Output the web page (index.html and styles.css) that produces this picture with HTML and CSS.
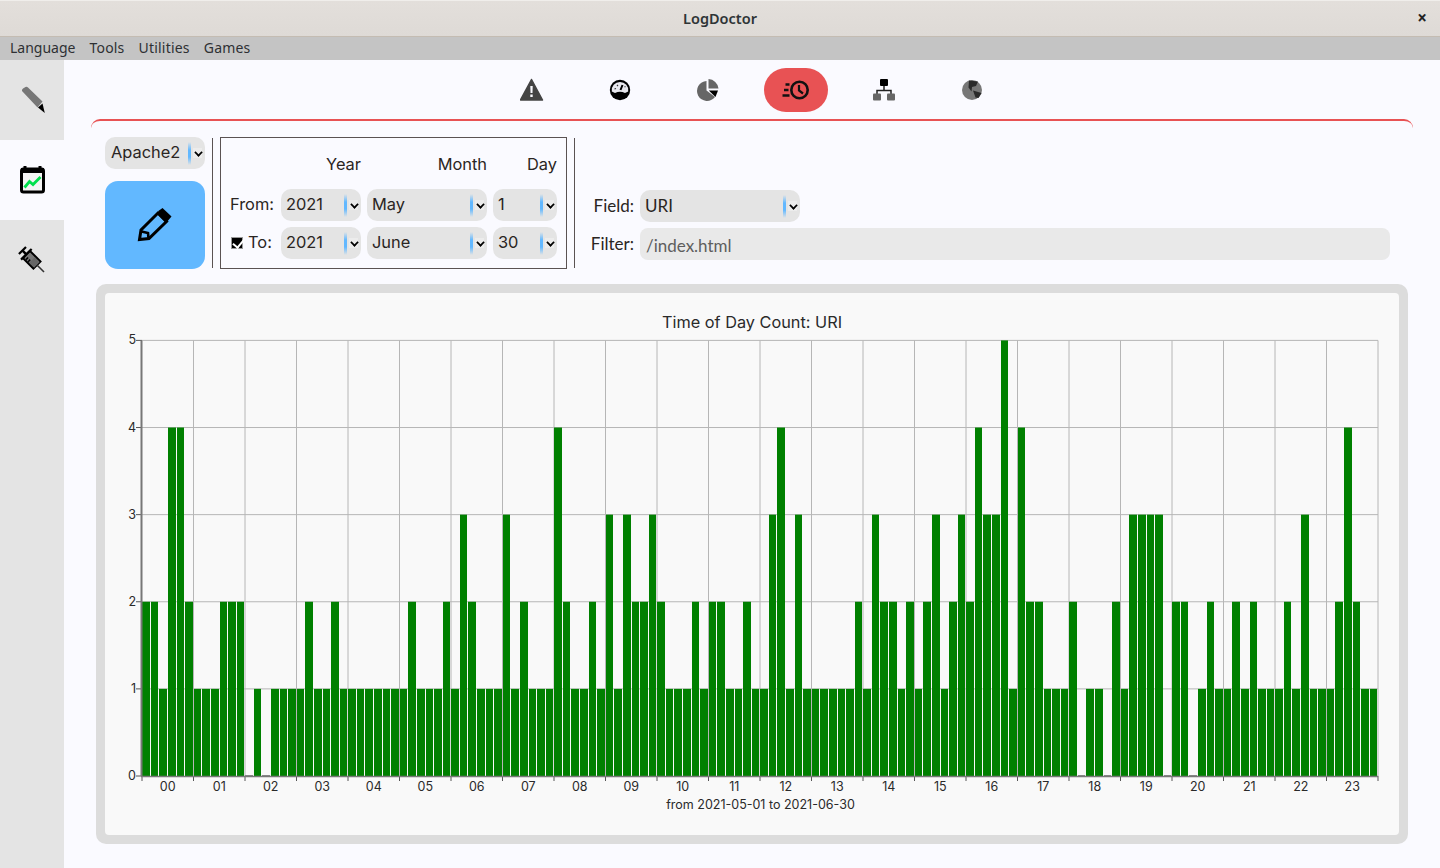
FILE: index.html
```html
<!DOCTYPE html>
<html lang="en">
<head>
<meta charset="utf-8">
<title>LogDoctor</title>
<link rel="stylesheet" href="styles.css">
</head>
<body>
<header class="titlebar"><span class="title">LogDoctor</span><span class="close">×</span></header>
<nav class="menubar"><span>Language</span><span>Tools</span><span>Utilities</span><span>Games</span></nav>
<div class="app">
  <aside class="sidebar">
    <div class="side-tab">
      <svg width="64" height="80" viewBox="0 0 64 80"><path d="M22 31Q21.500 29.500 23 28.500L25.500 27Q27 26.500 28 27.500L42.500 41.500L37.500 47.500Z" fill="#777"/><path d="M38 47.500L42.500 43.500L44.800 53Z" fill="#000"/></svg>
    </div>
    <div class="side-tab active">
      <svg width="64" height="80" viewBox="0 0 64 80"><rect x="21.500" y="29" width="22" height="23" rx="2" fill="#f4f4f4" stroke="#000" stroke-width="3"/><rect x="21" y="28" width="23" height="5" fill="#000"/><rect x="23.500" y="26" width="3" height="4" fill="#000"/><rect x="38.500" y="26" width="3" height="4" fill="#000"/><path d="M24.500 47.500L29.500 41.500L33 44.500L40.500 37" fill="none" stroke="#00e04c" stroke-width="2.800"/></svg>
    </div>
    <div class="side-tab">
      <svg width="64" height="80" viewBox="0 0 64 80"><g transform="rotate(-45 32 40)"><rect x="27" y="32" width="10" height="15" fill="#777" stroke="#000" stroke-width="2"/><rect x="28" y="40" width="8" height="7" fill="#666"/><path d="M28 35.500H31M28 38.500H31" stroke="#000" stroke-width="1.500"/><path d="M32 32V27" stroke="#000" stroke-width="2.500"/><path d="M27 26.500H37M24.500 32H39.500" stroke="#000" stroke-width="2.200"/><path d="M32 47V57" stroke="#333" stroke-width="1.600"/></g></svg>
    </div>
  </aside>
  <main class="content">
    <div class="tabs">
      <div class="tab"><svg width="24" height="24" viewBox="0 0 24 24"><path d="M11.500 1.500L22.500 22H.5Z" fill="#444" stroke="#444" stroke-width="1.500" stroke-linejoin="round"/><path d="M10.300 8H12.700L12.500 15H10.500Z" fill="#fafaff"/><rect x="10.300" y="16.500" width="2.400" height="2.500" fill="#fafaff"/></svg></div>
      <div class="tab"><svg width="24" height="24" viewBox="0 0 24 24"><circle cx="12" cy="12" r="10.200" fill="#000"/><path d="M3.800 13.500A8.300 8.300 0 1 1 20.200 13.500L17 15Q12 12.500 7 15Z" fill="#e8e8ee"/><path d="M12.500 12L14.500 7" stroke="#000" stroke-width="2"/><path d="M6.500 11L8 10.500M9 7L10 8M16.500 9L17.500 8.500" stroke="#333" stroke-width="1.200"/></svg></div>
      <div class="tab"><svg width="24" height="24" viewBox="0 0 24 24"><path d="M10.500 3A10 10 0 1 0 19 19L10.500 12.500Z" fill="#666"/><path d="M12.500 1A10.500 10.500 0 0 1 22.500 10.500H12.500Z" fill="#666"/><path d="M12.800 12.500H22L19.500 19Z" fill="#000"/></svg></div>
      <div class="tab tab-on"><svg width="32" height="24" viewBox="0 0 32 24"><circle cx="19.500" cy="12" r="8.200" fill="none" stroke="#111" stroke-width="2.600"/><path d="M19 7V12.500L23 15.500" fill="none" stroke="#111" stroke-width="2.200"/><path d="M5.500 6.500H9.500M4 12H8.500M2.500 17.500H9.500" stroke="#111" stroke-width="2.400"/></svg></div>
      <div class="tab"><svg width="24" height="24" viewBox="0 0 24 24"><rect x="8" y="1" width="8" height="7" rx="1" fill="#000"/><path d="M12 8V12.500M5 16V12.500H19V16" fill="none" stroke="#222" stroke-width="1.500"/><rect x="1" y="15.500" width="8" height="7" rx="1" fill="#666"/><rect x="15" y="15.500" width="8" height="7" rx="1" fill="#666"/></svg></div>
      <div class="tab"><svg width="24" height="24" viewBox="0 0 24 24"><circle cx="12" cy="12" r="10" fill="#777"/><path d="M9 2.500L18 3.500L16 8L12 9L11.500 13.500L8.500 9.500ZM13 12.500L21.500 15L18.500 20L15.500 19.500Z" fill="#2a2a2a"/></svg></div>
    </div>
    <div class="rule"></div>
    <section class="controls">
      <div class="left-col">
        <div class="combo combo-web"><span class="combo-text">Apache2</span><i class="combo-bar"></i><i class="combo-arrow"></i></div>
        <button class="draw" type="button" aria-label="Draw"><svg width="36" height="36" viewBox="0 0 36 36"><path d="M2.500 32.500L4 23L21 6L29.500 14.500L12 31.500Z" fill="#62b8ff" stroke="#000" stroke-width="3" stroke-linejoin="miter"/><path d="M22 3.500L25.500 1L34.500 9.500L29 16L20 7Z" fill="#000"/><path d="M4.500 24.500L11 26L11.500 31" fill="none" stroke="#000" stroke-width="2.600"/></svg></button>
      </div>
      <div class="sep"></div>
      <div class="dates">
        <span class="head year">Year</span><span class="head month">Month</span><span class="head day">Day</span>
        <span class="from-label">From:</span>
        <div class="combo"><span class="combo-text">2021</span><i class="combo-bar"></i><i class="combo-arrow"></i></div>
        <div class="combo"><span class="combo-text">May</span><i class="combo-bar"></i><i class="combo-arrow"></i></div>
        <div class="combo"><span class="combo-text">1</span><i class="combo-bar"></i><i class="combo-arrow"></i></div>
        <span class="to-label"><i class="check"></i>To:</span>
        <div class="combo"><span class="combo-text">2021</span><i class="combo-bar"></i><i class="combo-arrow"></i></div>
        <div class="combo"><span class="combo-text">June</span><i class="combo-bar"></i><i class="combo-arrow"></i></div>
        <div class="combo"><span class="combo-text">30</span><i class="combo-bar"></i><i class="combo-arrow"></i></div>
      </div>
      <div class="sep sep-right"></div>
      <div class="fields">
        <span class="field-label">Field:</span>
        <div class="combo combo-field"><span class="combo-text">URI</span><i class="combo-bar"></i><i class="combo-arrow"></i></div>
        <span class="field-label">Filter:</span>
        <div class="filter">/index.html</div>
      </div>
    </section>
    <section class="chart-frame"><div class="chart" id="chart"></div></section>
  </main>
</div>
<script src="chart.js"></script>
</body>
</html>
```
FILE: styles.css
```css
* { box-sizing: border-box; }
html, body { margin: 0; height: 100%; }
body {
  width: 1440px; height: 868px; overflow: hidden;
  display: flex; flex-direction: column;
  background: #fafaff; color: #2a2522;
  font-family: Inter, "Liberation Sans", sans-serif;
}
.titlebar {
  height: 37px; flex: none; position: relative;
  display: flex; align-items: center; justify-content: center;
  padding-bottom: 2px;
  background: linear-gradient(#e3dfdb, #dedad6);
  border-bottom: 1px solid #c4bcb2;
  border-top: 1px solid #f0eeeb;
}
.title { font: 600 14.500px "Noto Sans", sans-serif; color: #2e3436; }
.close { position: absolute; right: 13px; top: 5px; font: 700 17px "Noto Sans", sans-serif; color: #222; }
.menubar {
  height: 23px; flex: none; display: flex; gap: 14px; align-items: center;
  padding: 0 0 2px 10px; background: #c4c4c4; color: #2e3033;
  font: 14px "Noto Sans", sans-serif;
}
.menubar span:nth-child(n+2) { letter-spacing: .2px; }
.app { flex: 1; display: flex; min-height: 0; }
.sidebar { width: 64px; flex: none; background: #e4e4e4; }
.side-tab { height: 80px; }
.side-tab svg { display: block; }
.side-tab.active { background: #fafaff; }
.content { flex: 1; min-width: 0; display: flex; flex-direction: column; padding-top: 8px; }
.tabs { display: flex; justify-content: center; gap: 24px; height: 44px; flex: none; }
.tab { width: 64px; height: 44px; display: flex; align-items: center; justify-content: center; border-radius: 22px; }
.tab-on { background: #e85254; }
.rule {
  height: 18px; flex: none; margin: 7px 27px 0;
  border-top: 2px solid #e85254; border-radius: 9px 9px 0 0;
}
.controls { height: 132px; flex: none; display: flex; padding-left: 41px; }
.left-col { width: 100px; display: flex; flex-direction: column; gap: 12px; }
.combo {
  height: 32px; position: relative; display: flex; align-items: center;
  background: #e4e4e4; border-radius: 10px; padding: 0 0 2px 5px;
  font-size: 16.400px; color: #2a2522;
}
.combo-web { padding-left: 6px; }
.combo-bar {
  position: absolute; right: 14px; top: 5px; width: 3px; height: 23px;
  background: linear-gradient(rgba(98,184,255,0), #62b8ff 35%, #62b8ff 65%, rgba(98,184,255,0));
}
.combo-arrow {
  position: absolute; right: 3px; top: 11px; width: 9px; height: 10px; background: #ececec;
}
.combo-arrow::after {
  content: ""; position: absolute; left: 2px; top: 1px; width: 5px; height: 5px;
  border-right: 2px solid #000; border-bottom: 2px solid #000; transform: rotate(45deg) scale(.85);
}
.draw {
  width: 100px; height: 88px; padding: 0; border: 0; border-radius: 13px; background: #62b8ff;
  display: flex; align-items: center; justify-content: center;
}
.sep { width: 1px; margin: 1px 0 1px 7px; background: #5a5252; flex: none; }
.sep-right { margin-left: 7px; }
.dates {
  margin-left: 7px; width: 347px; border: 1px solid #5a5252;
  display: grid; grid-template-columns: 51px 80px 120px 64px; column-gap: 6px;
  grid-template-rows: 45px 32px 32px; row-gap: 6px; padding-left: 3px;
  align-items: center; font-size: 16.400px;
}
.head { text-align: right; padding-top: 7px; }
.year { grid-column: 2; }
.month { grid-column: 3; }
.day { grid-column: 4; }
.from-label { grid-column: 1; padding: 0 0 2px 6px; white-space: nowrap; }
.to-label { grid-column: 1; display: flex; align-items: center; gap: 5px; padding: 0 0 2px 7px; }
.check {
  width: 12px; height: 12px; background: #000; position: relative; flex: none; border: 1px solid #999; margin-top: 2px;
}
.check::after {
  content: ""; position: absolute; left: 3px; top: -1px; width: 5px; height: 9px;
  border-right: 2px solid #fff; border-bottom: 2px solid #fff; transform: rotate(40deg);
}
.fields {
  flex: 1; padding: 53px 50px 9px 4px;
  display: grid; grid-template-columns: 55px 1fr; column-gap: 6px; row-gap: 6px;
  grid-auto-rows: 32px; align-items: center; font-family: Lato, sans-serif; font-size: 17px;
}
.field-label { text-align: right; padding-bottom: 2px; }
.combo-field { width: 160px; font-family: Lato, sans-serif; font-size: 17px; }
.filter {
  height: 32px; background: #e9e9e9; border-radius: 8px; padding: 2px 0 0 6px;
  display: flex; align-items: center; color: #5e5e5e; font: 17px Lato, sans-serif;
}
.chart-frame {
  flex: none; height: 560px; margin: 15px 32px 24px;
  padding: 9px; background: #dcdcdc; border-radius: 10px;
}
.chart { height: 100%; background: #f9f9f9; border-radius: 4px; overflow: hidden; }
.chart svg { display: block; }
.bar { fill: #008000; }
.zero { fill: #8a8a8a; }
.grid { stroke: #b6b6b6; stroke-width: 1; }
.axis { stroke: #777; fill: none; }
.tick { stroke: #555; stroke-width: 1; }
.chart text { font-family: Inter, sans-serif; fill: #2a2a2a; }
.t-main { font-size: 16.300px; }
.t-axis { font-size: 12.500px; }
.t-sub { font-size: 12.500px; }
```
FILE: chart.js
```js
(function () {
  var NS = 'http://www.w3.org/2000/svg';
  var vals = [2,2,1,4,4,2, 1,1,1,2,2,2, 0,1,0,1,1,1, 1,2,1,1,2,1, 1,1,1,1,1,1, 1,2,1,1,1,2,
    1,3,2,1,1,1, 3,1,2,1,1,1, 4,2,1,1,2,1, 3,1,3,2,2,3, 2,1,1,1,2,1, 2,2,1,1,2,1,
    1,3,4,1,3,1, 1,1,1,1,1,2, 1,3,2,2,1,2, 1,2,3,1,2,3, 2,4,3,3,5,1, 4,2,2,1,1,1,
    2,0,1,1,0,2, 1,3,3,3,3,0, 2,2,0,1,2,1, 1,2,1,2,1,1, 1,2,1,3,1,1, 1,2,4,2,1,1];
  var OX = 105, OY = 293;
  var L = 142 - OX, R = 1378 - OX, B = 776 - OY, T = 340.4 - OY;
  var svg = document.createElementNS(NS, 'svg');
  svg.setAttribute('width', 1294);
  svg.setAttribute('height', 542);
  function add(tag, attrs, text) {
    var e = document.createElementNS(NS, tag);
    for (var k in attrs) e.setAttribute(k, attrs[k]);
    if (text !== undefined) e.textContent = text;
    svg.appendChild(e);
    return e;
  }
  var stepX = (R - L) / 24, unit = (B - T) / 5, i, x, y;
  for (i = 0; i <= 24; i++) {
    x = L + i * stepX;
    if (i > 0) add('line', { 'class': 'grid', x1: x, x2: x, y1: T, y2: B });
    add('line', { 'class': 'tick', x1: x, x2: x, y1: B, y2: B + 5 });
  }
  for (i = 0; i <= 5; i++) {
    y = B - i * unit;
    if (i > 0) add('line', { 'class': 'grid', x1: L, x2: R, y1: y, y2: y });
    add('line', { 'class': 'tick', x1: L - 6, x2: L, y1: y, y2: y });
    add('text', { 'class': 't-axis', x: L - 6, y: y + 4, 'text-anchor': 'end' }, String(i));
  }
  function edge(n) { return Math.round(L + 0.3 + n * (R - L) / 144); }
  vals.forEach(function (v, n) {
    var bx = edge(n), w = edge(n + 1) - bx - 1;
    if (v > 0) add('rect', { 'class': 'bar', x: bx, y: B - v * unit, width: w, height: v * unit });
    else add('rect', { 'class': 'zero', x: bx, y: B - 1, width: w, height: 1 });
  });
  add('line', { 'class': 'axis', x1: L - 0.5, x2: L - 0.5, y1: T, y2: B, 'stroke-width': 2 });
  add('line', { 'class': 'axis', x1: L - 1, x2: R, y1: B + 0.5, y2: B + 0.5, 'stroke-width': 1.5 });
  for (i = 0; i < 24; i++) {
    add('text', { 'class': 't-axis', x: L + (i + 0.5) * stepX, y: B + 15, 'text-anchor': 'middle' }, (i < 10 ? '0' : '') + i);
  }
  add('text', { 'class': 't-main', x: 647, y: 35, 'text-anchor': 'middle' }, 'Time of Day Count: URI');
  add('text', { 'class': 't-sub', x: 655.5, y: 516, 'text-anchor': 'middle' }, 'from 2021-05-01 to 2021-06-30');
  document.getElementById('chart').appendChild(svg);
})();
```
